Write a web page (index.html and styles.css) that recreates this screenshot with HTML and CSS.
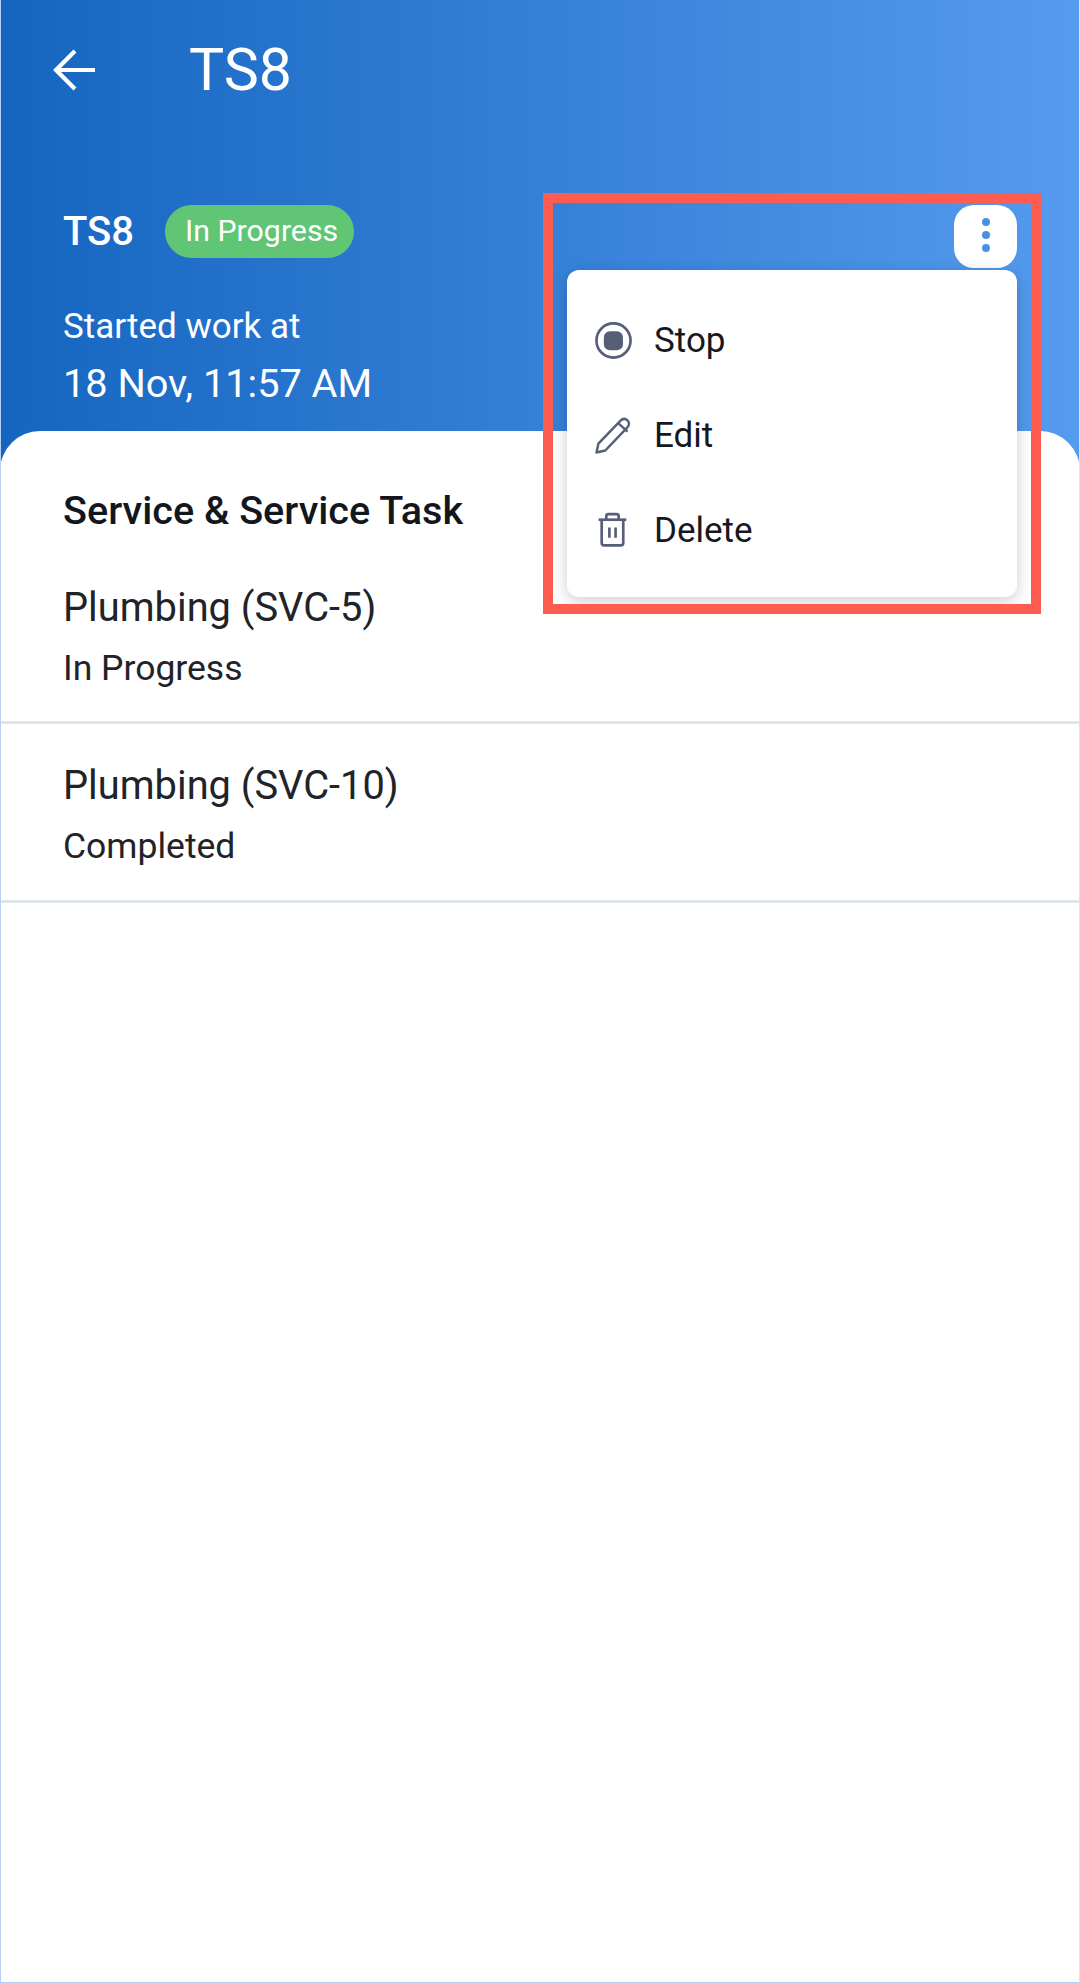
FILE: index.html
```html
<!DOCTYPE html>
<html lang="en">
<head>
    <meta charset="UTF-8">
    <meta name="viewport" content="width=device-width, initial-scale=1.0">
    <title>TS8</title>
    <link rel="stylesheet" href="styles.css">
</head>
<body>
    <div class="screen">
        <header class="hero">
            <div class="topbar">
                <svg class="back-icon" viewBox="0 0 42 42" fill="none" stroke="#fff" stroke-width="4.2">
                    <path d="M42 21H3"/>
                    <path d="M22 2L3 21l19 19"/>
                </svg>
                <span class="topbar-title">TS8</span>
            </div>
            <div class="summary">
                <div class="summary-head">
                    <span class="summary-name">TS8</span>
                    <span class="badge">In Progress</span>
                </div>
                <div class="summary-label">Started work at</div>
                <div class="summary-date">18 Nov, 11:57 AM</div>
            </div>
        </header>

        <main class="sheet">
            <h2 class="sheet-title">Service &amp; Service Task</h2>
            <div class="task task-first">
                <div class="task-name">Plumbing (SVC-5)</div>
                <div class="task-status">In Progress</div>
            </div>
            <div class="task">
                <div class="task-name">Plumbing (SVC-10)</div>
                <div class="task-status">Completed</div>
            </div>
        </main>

        <button class="more-btn" aria-label="More">
            <span class="dot"></span>
            <span class="dot"></span>
            <span class="dot"></span>
        </button>

        <div class="menu">
            <div class="menu-item">
                <svg class="menu-icon" viewBox="0 0 36 36" fill="none">
                    <circle cx="18" cy="18" r="16.6" stroke="#565f78" stroke-width="2.6"/>
                    <rect x="8.6" y="9" width="18.6" height="18.6" rx="6" fill="#565f78"/>
                </svg>
                <span>Stop</span>
            </div>
            <div class="menu-item">
                <svg class="menu-icon" viewBox="0 0 36 36" fill="none" stroke="#565f78" stroke-width="2.4" stroke-linejoin="round">
                    <path d="M1.5 34.5l1.8-8.6L24.6 3.8c2.2-2.2 5-2.4 7-.5 2 2 1.9 4.8-.3 7L10 32.6z"/>
                    <path d="M22.6 6l9 8.3"/>
                </svg>
                <span>Edit</span>
            </div>
            <div class="menu-item">
                <svg class="menu-icon" viewBox="0 0 36 36" fill="none" stroke="#565f78" stroke-width="2.6" stroke-linejoin="round">
                    <path d="M3.5 7.5h27"/>
                    <path d="M11 7V4a2 2 0 0 1 2-2h8a2 2 0 0 1 2 2v3"/>
                    <path d="M6.5 8v22a2.5 2.5 0 0 0 2.500 2.500h16a2.500 2.500 0 0 0 2.500-2.500V8"/>
                    <path d="M14 15v10M20 15v10"/>
                </svg>
                <span>Delete</span>
            </div>
        </div>

        <div class="highlight"></div>
    </div>
</body>
</html>
```

FILE: styles.css
```css
* {
    box-sizing: border-box;
}
body {
    margin: 0;
    padding: 0;
    font-family: Roboto, "Liberation Sans", sans-serif;
    background-color: #fff;
}
.screen {
    position: relative;
    width: 1080px;
    height: 1983px;
    overflow: hidden;
    background: #fff;
    border-left: 1px solid #b5d0f2;
    border-bottom: 1px solid #b5d0f2;
    border-right: 1px solid #d5e4f7;
}
.hero {
    height: 471px;
    margin: 0 -1px;
    padding: 40px 0 0 53px;
    background: linear-gradient(90deg, #1565c0 0%, #559bef 100%);
    color: #fff;
}
.topbar {
    display: flex;
    align-items: center;
    height: 59px;
}
.back-icon {
    width: 42px;
    height: 42px;
}
.topbar-title {
    margin-left: 94px;
    font-size: 59px;
    line-height: 59px;
}
.summary {
    padding: 106px 0 0 10px;
}
.summary-head {
    display: flex;
    align-items: center;
    height: 53px;
}
.summary-name {
    font-size: 40px;
    font-weight: 500;
}
.badge {
    margin-left: 31px;
    padding: 0 16px 0 20px;
    height: 53px;
    line-height: 51px;
    border-radius: 27px;
    background: #60c574;
    font-size: 30.300px;
}
.summary-label {
    margin-top: 47px;
    font-size: 35px;
    line-height: 44px;
}
.summary-date {
    margin-top: 12px;
    font-size: 39.700px;
    line-height: 46px;
}
.sheet {
    margin: -40px -1px 0;
    height: 1552px;
    position: relative;
    border-radius: 40px 40px 0 0;
    background: #fff;
    padding-top: 54px;
}
.sheet-title {
    margin: 0 0 0 63px;
    font-size: 39.600px;
    font-weight: 500;
    line-height: 52px;
    color: #14161e;
}
.task {
    height: 179px;
    padding: 38px 0 0 63px;
    border-bottom: 3px solid #dde6ea;
}
.task-first {
    padding-top: 47px;
    height: 187px;
}
.task-name {
    font-size: 39.800px;
    line-height: 48px;
    color: #212329;
}
.task-status {
    margin-top: 15px;
    font-size: 35.500px;
    line-height: 42px;
    color: #212329;
}
.more-btn {
    position: absolute;
    left: 953px;
    top: 205px;
    width: 63px;
    height: 63px;
    padding: 0 0 3px;
    border: none;
    border-radius: 20px;
    background: #fff;
    display: flex;
    flex-direction: column;
    align-items: center;
    justify-content: center;
    gap: 5px;
}
.dot {
    width: 8px;
    height: 8px;
    border-radius: 50%;
    background: #4a90e6;
}
.menu {
    position: absolute;
    left: 566px;
    top: 270px;
    width: 450px;
    height: 327px;
    padding-top: 23px;
    border-radius: 12px;
    background: #fff;
    box-shadow: 0 4px 16px rgba(0, 0, 0, 0.2);
}
.menu-item {
    display: flex;
    align-items: center;
    height: 95px;
    padding-left: 28px;
    font-size: 35px;
    color: #17181f;
}
.menu-icon {
    width: 37px;
    height: 37px;
    margin-right: 22px;
    flex-shrink: 0;
}
.highlight {
    position: absolute;
    left: 542px;
    top: 193px;
    width: 498px;
    height: 421px;
    border: 10px solid #fd5c50;
    pointer-events: none;
}
```
